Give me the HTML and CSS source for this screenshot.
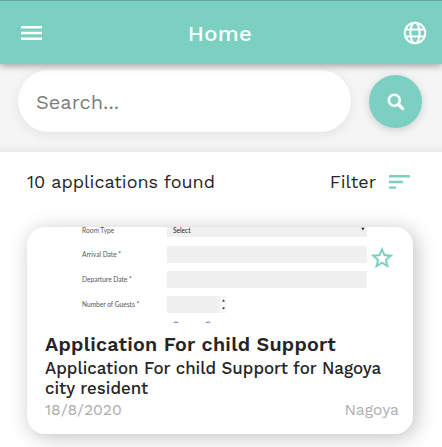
FILE: index.html
```html
<!DOCTYPE html>
<html lang="en">
<head>
<meta charset="utf-8">
<title>Home</title>
<link rel="stylesheet" href="styles.css">
</head>
<body>
<div class="app">
  <header class="bar">
    <svg class="menu" width="21" height="14" viewBox="0 0 21 14"><path d="M0 1.2h21M0 7h21M0 12.8h21" stroke="#fff" stroke-width="2.4"/></svg>
    <h1>Home</h1>
    <svg class="globe" width="24" height="24" viewBox="0 0 24 24" fill="none" stroke="#fff" stroke-width="2"><circle cx="12" cy="12" r="10.3"/><ellipse cx="12" cy="12" rx="4.6" ry="10.3"/><path d="M2.5 8.6h19M2.5 15.4h19"/></svg>
  </header>
  <section class="search">
    <div class="field">Search...</div>
    <div class="go"><svg width="18" height="18" viewBox="0 0 18 18" fill="none" stroke="#fff"><circle cx="7.3" cy="7.3" r="5.5" stroke-width="2.6"/><path d="M11.5 11.5l4.2 4.2" stroke-width="3.2" stroke-linecap="round"/></svg></div>
  </section>
  <main class="results">
    <div class="summary">
      <span>10 applications found</span>
      <span class="filter">Filter<svg width="21" height="14" viewBox="0 0 21 14"><path d="M0 1.2h21M0 7h14M0 12.6h7" stroke="#7bd0c1" stroke-width="2.4"/></svg></span>
    </div>
    <article class="card">
      <div class="preview">
        <div class="line first"><span>Room Type</span><div class="box">Select<svg width="4" height="4" viewBox="0 0 4 4"><path d="M.3 .8h3.2L1.9 3.4z" fill="#222"/></svg></div></div>
        <div class="line"><span>Arrival Date *</span><div class="box"></div></div>
        <div class="line"><span>Departure Date *</span><div class="box"></div></div>
        <div class="line"><span>Number of Guests *</span><div class="box small"></div><svg class="spin" width="7" height="17" viewBox="0 0 7 17"><rect width="7" height="17" fill="#f8f8f8"/><path d="M2 5.5h3L3.5 3.5zM2 11.5h3L3.5 13.5z" fill="#222"/></svg></div>
        <svg class="radios" width="40" height="2" viewBox="0 0 40 2" fill="none" stroke="#6b63d8"><path d="M.5 1.8Q3 0 5 1.8M33 1.8Q35.5 0 37.5 1.8"/></svg>
      </div>
      <svg class="star" width="26" height="26" viewBox="0 0 24 24"><path fill="#7bd0c1" stroke="#7bd0c1" stroke-width=".3" d="M22 9.24l-7.19-.62L12 2 9.19 8.63 2 9.24l5.46 4.73L5.82 21 12 17.27 18.18 21l-1.63-7.03L22 9.24zM12 15.4l-3.76 2.27 1-4.28-3.32-2.88 4.38-.38L12 6.1l1.71 4.04 4.38.38-3.32 2.88 1 4.28L12 15.4z"/></svg>
      <h2>Application For child Support</h2>
      <p>Application For child Support for Nagoya<br>city resident</p>
      <footer><span>18/8/2020</span><span>Nagoya</span></footer>
    </article>
  </main>
</div>
</body>
</html>
```
FILE: styles.css
```css
* { box-sizing: border-box; }
body { margin: 0; background: #fff; color: #252525; font-family: "Work Sans", Inter, sans-serif; overflow: hidden; }
svg { display: block; flex: none; }
.app { height: 447px; overflow: hidden; }
.bar { position: relative; z-index: 2; height: 64px; padding: 0 13px 0 21px; display: grid; grid-template-columns: 24px 1fr 26px; align-items: center; background: #7bd0c1; border-top: 1px solid #62a599; box-shadow: 0 2px 7px rgba(0,0,0,.34); color: #fff; }
h1 { margin: 3px 8px 0 0; text-align: center; font-size: 22px; line-height: 28px; font-weight: 500; letter-spacing: .4px; }
.search { height: 88px; padding: 6px 18px 0; display: flex; gap: 18px; background: linear-gradient(#f5f5f5 90%, #ebebeb); }
.field { width: 333px; height: 62px; padding: 1px 18px 0; border-radius: 31px; display: flex; align-items: center; background: #fff; color: #7c7c7c; font-size: 20px; box-shadow: 0 3px 12px rgba(0,0,0,.08); }
.go { width: 53px; height: 53px; margin-top: 5px; border-radius: 50%; background: #7bd0c1; display: grid; place-items: center; box-shadow: 0 2px 8px rgba(0,0,0,.17); }
.results { padding: 0 29px 0 27px; }
.summary { height: 75px; padding: 16px 3px 0 0; display: flex; justify-content: space-between; font-size: 18px; line-height: 27px; }
.filter { display: flex; gap: 13px; }
.filter svg { margin-top: 7px; }
.card { position: relative; height: 207px; padding: 0 14px 0 18px; border-radius: 18px; background: #fff; box-shadow: 3px 3px 20px rgba(0,0,0,.25); }
.preview { height: 106px; padding-left: 37px; color: #555; font: 6.6px/17px Lato, sans-serif; }
.line { display: flex; height: 17px; margin-bottom: 8px; white-space: nowrap; }
.line > span { width: 85px; }
.line.first { height: 10px; margin-bottom: 9px; line-height: 7px; }
.box { width: 200px; display: flex; justify-content: space-between; padding: 0 2px 0 6px; background: #f0f0f0; color: #222; }
.box.small { width: 53px; }
.radios { margin: 1px 0 0 91px; }
.star { position: absolute; left: 342px; top: 18px; }
h2 { margin: 0; font-size: 19.7px; line-height: 24px; font-weight: 600; letter-spacing: .25px; white-space: nowrap; }
p { margin: 1px 0 0; font-size: 16.9px; line-height: 20px; font-weight: 500; white-space: nowrap; }
footer { display: flex; justify-content: space-between; margin-top: 1px; font-size: 15.7px; line-height: 22px; color: #adadad; }
```
